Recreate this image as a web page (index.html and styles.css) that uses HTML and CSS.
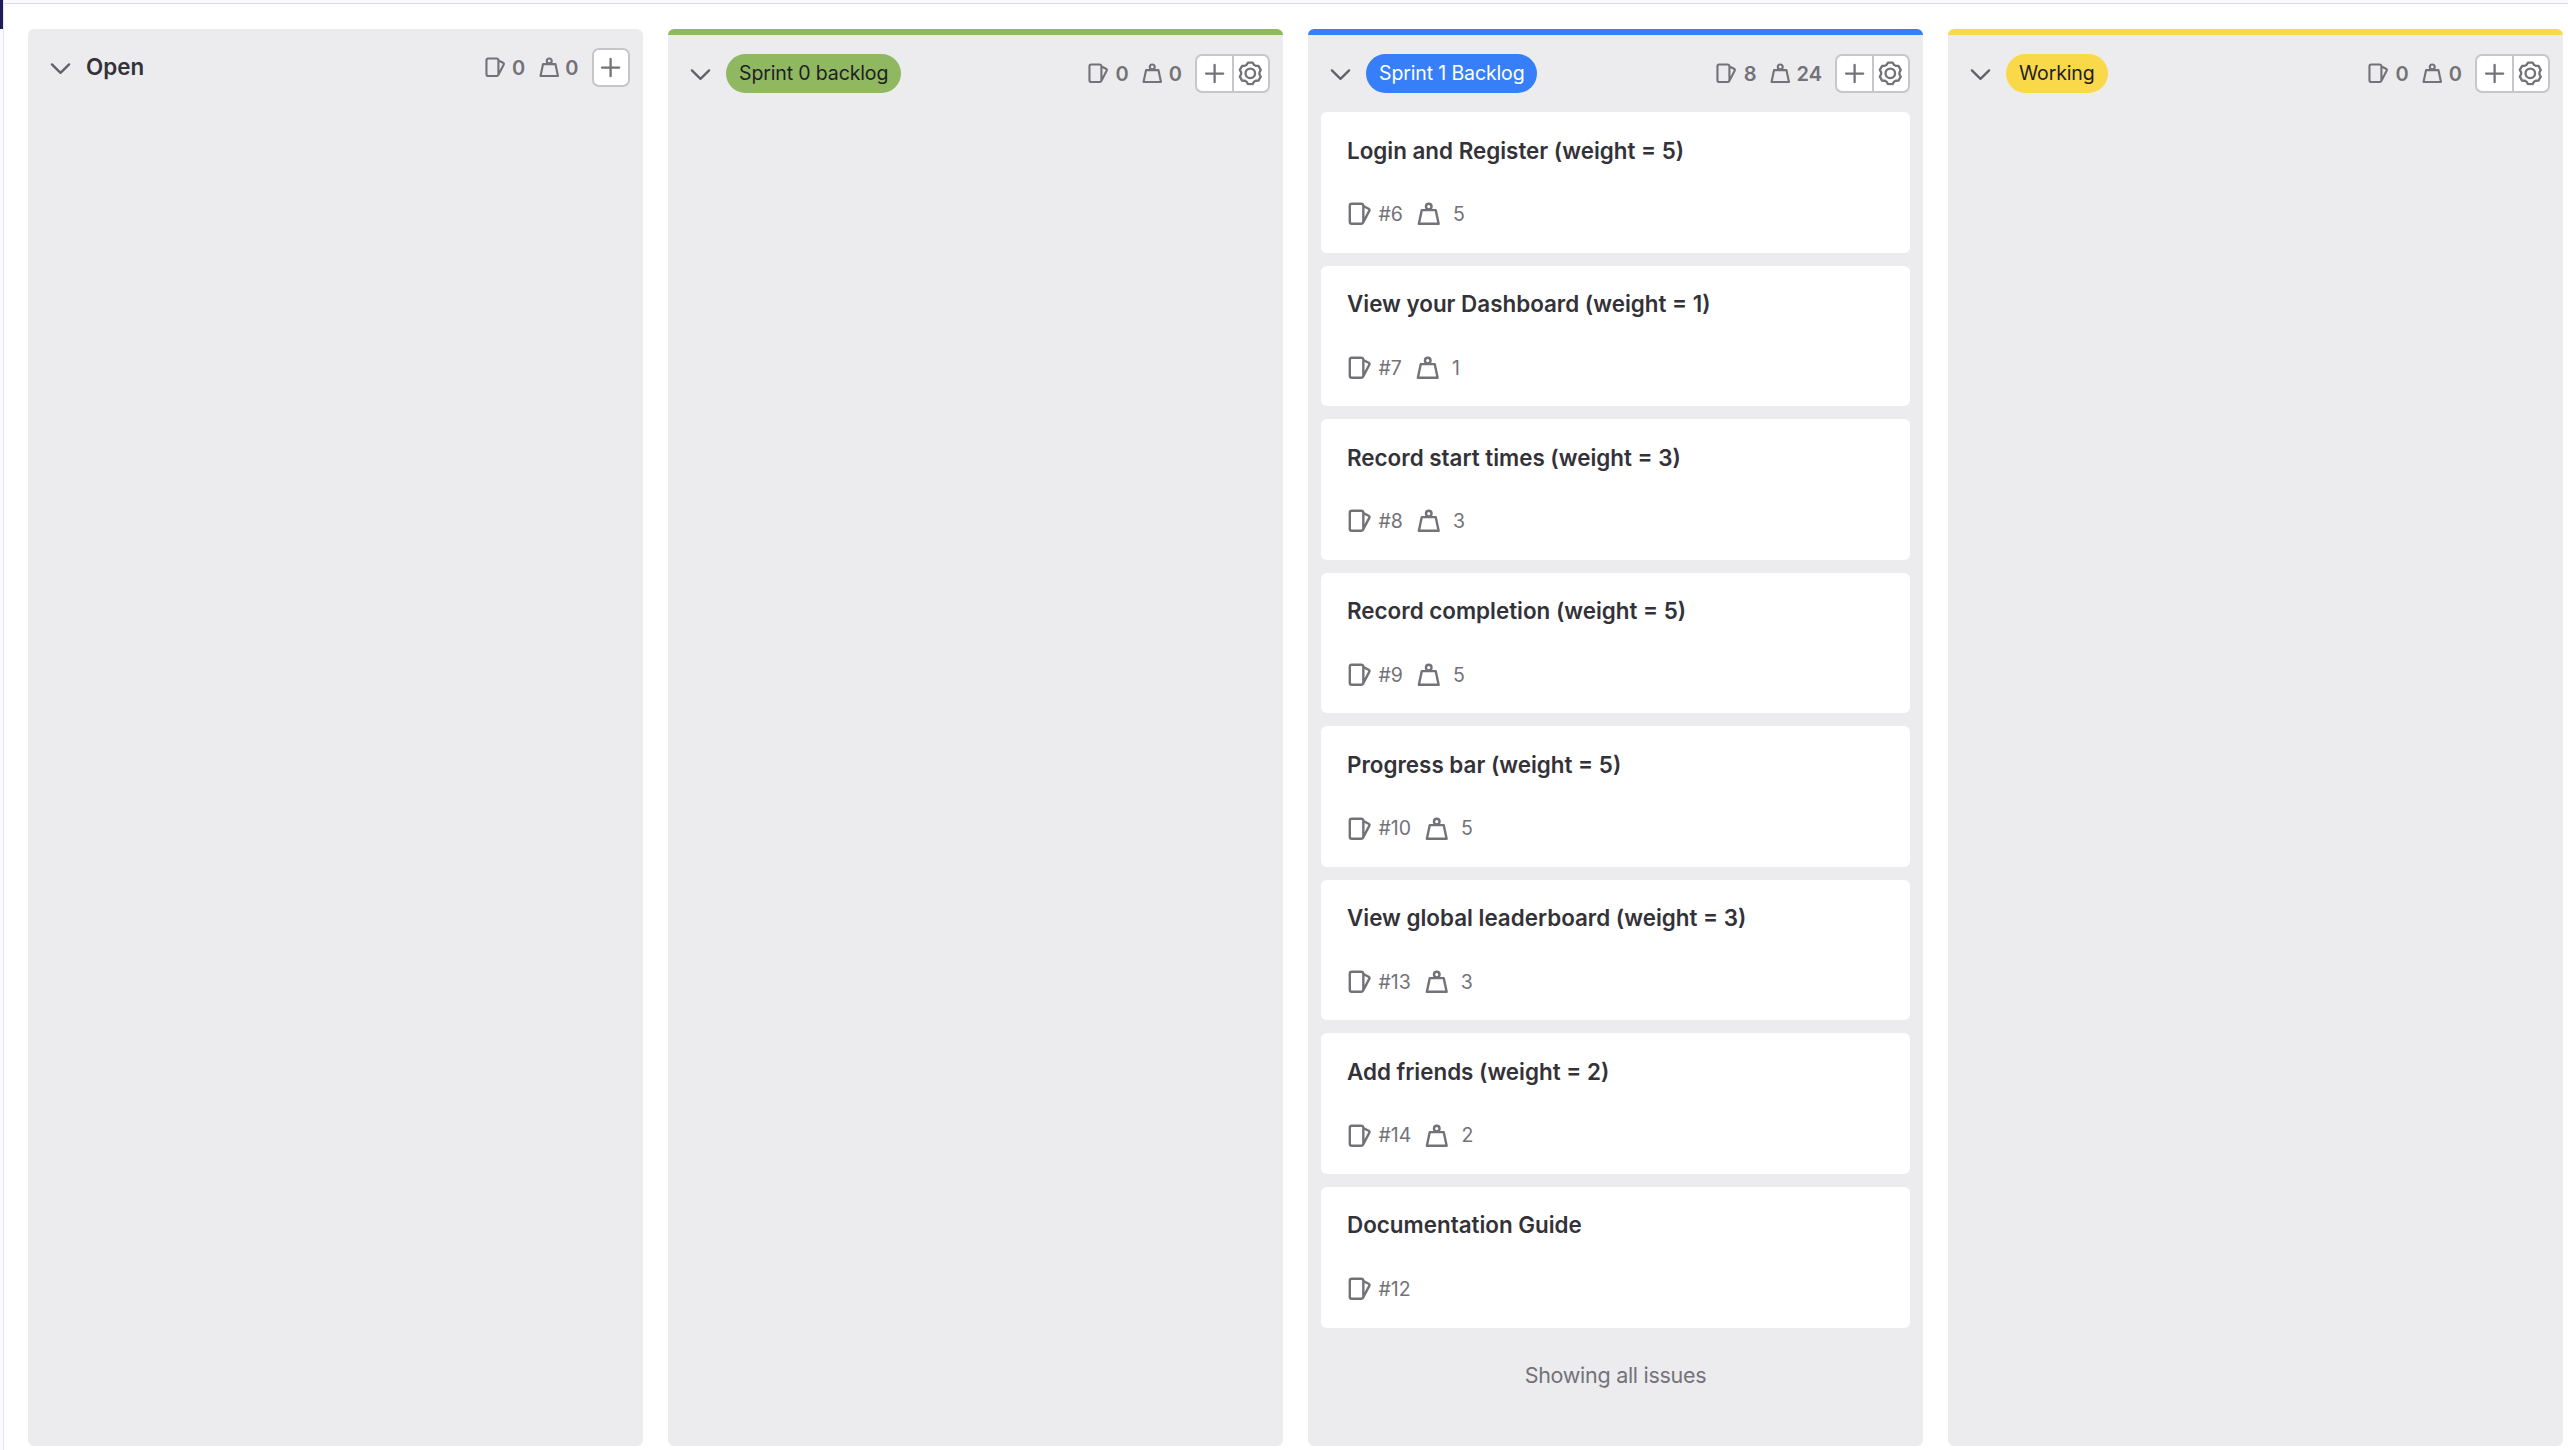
FILE: index.html
```html
<!DOCTYPE html>
<html lang="en">
<head>
<meta charset="utf-8">
<title>Issue board</title>
<link rel="stylesheet" href="styles.css">
</head>
<body>
<svg class="sprite" aria-hidden="true">
  <symbol id="chevron" viewBox="0 0 16 16"><path d="M2.5 6 8 11.4 13.5 6" fill="none" stroke="currentColor" stroke-width="1.5" stroke-linecap="round" stroke-linejoin="round"/></symbol>
  <symbol id="issues" viewBox="0 0 16 16"><path fill-rule="evenodd" d="M3 2.5h6a.5.5 0 0 1 .5.5v10a.5.5 0 0 1-.5.5H3a.5.5 0 0 1-.5-.5V3a.5.5 0 0 1 .5-.5zM1 3a2 2 0 0 1 2-2h6a2 2 0 0 1 1.97 1.658l2.913 1.516a1.75 1.75 0 0 1 .744 2.36l-3.878 7.45a.753.753 0 0 1-.098.145c-.36.526-.965.871-1.651.871H3a2 2 0 0 1-2-2V3zm10 7.254 2.297-4.413a.25.25 0 0 0-.106-.337L11 4.364v5.89z"/></symbol>
  <symbol id="weight" viewBox="0 0 16 16"><g fill="none" stroke="currentColor" stroke-width="1.5" stroke-linejoin="round"><circle cx="8" cy="3.5" r="1.75"/><path d="M3.6 5.75h8.8l1.8 8.5H1.8z"/></g></symbol>
  <symbol id="plus" viewBox="0 0 16 16"><path d="M8.2 2.6v11.2M2.6 8.2h11.2" fill="none" stroke="currentColor" stroke-width="1.5" stroke-linecap="round"/></symbol>
  <symbol id="gear" viewBox="0 0 16 16"><g fill="none" stroke="currentColor" stroke-width="1.5" stroke-linejoin="round"><circle cx="8" cy="8" r="3.1"/><path d="M6.51 1.01H9.49L10.44 2.52 11.53 3.15 13.31 3.22 14.8 5.79 13.97 7.37V8.63L14.8 10.21 13.31 12.78 11.53 12.85 10.44 13.48 9.49 14.99H6.51L5.56 13.48 4.47 12.85 2.69 12.78 1.2 10.21 2.03 8.63V7.37L1.2 5.79 2.69 3.22 4.47 3.15 5.56 2.52z"/></g></symbol>
</svg>
<div class="topbar"></div>
<div class="page">
  <aside class="rail"></aside>
  <main class="board">
    <section class="list">
      <header class="head">
        <svg class="chev"><use href="#chevron"/></svg><h2 class="name">Open</h2>
        <div class="counts"><svg class="ico"><use href="#issues"/></svg><span>0</span><svg class="ico wt"><use href="#weight"/></svg><span>0</span></div>
        <div class="btns"><button class="btn"><svg class="bico"><use href="#plus"/></svg></button></div>
      </header>
    </section>
    <section class="list green">
      <header class="head">
        <svg class="chev"><use href="#chevron"/></svg><span class="pill">Sprint 0 backlog</span>
        <div class="counts"><svg class="ico"><use href="#issues"/></svg><span>0</span><svg class="ico wt"><use href="#weight"/></svg><span>0</span></div>
        <div class="btns"><button class="btn"><svg class="bico"><use href="#plus"/></svg></button><button class="btn"><svg class="bico"><use href="#gear"/></svg></button></div>
      </header>
    </section>
    <section class="list blue">
      <header class="head">
        <svg class="chev"><use href="#chevron"/></svg><span class="pill">Sprint 1 Backlog</span>
        <div class="counts"><svg class="ico"><use href="#issues"/></svg><span>8</span><svg class="ico wt"><use href="#weight"/></svg><span>24</span></div>
        <div class="btns"><button class="btn"><svg class="bico"><use href="#plus"/></svg></button><button class="btn"><svg class="bico"><use href="#gear"/></svg></button></div>
      </header>
      <ul class="cards">
        <li class="card"><h3 class="title">Login and Register (weight = 5)</h3><div class="meta"><svg class="cico"><use href="#issues"/></svg><span>#6</span><svg class="cico cwt"><use href="#weight"/></svg><span>5</span></div></li>
        <li class="card"><h3 class="title">View your Dashboard (weight = 1)</h3><div class="meta"><svg class="cico"><use href="#issues"/></svg><span>#7</span><svg class="cico cwt"><use href="#weight"/></svg><span>1</span></div></li>
        <li class="card"><h3 class="title">Record start times (weight = 3)</h3><div class="meta"><svg class="cico"><use href="#issues"/></svg><span>#8</span><svg class="cico cwt"><use href="#weight"/></svg><span>3</span></div></li>
        <li class="card"><h3 class="title">Record completion (weight = 5)</h3><div class="meta"><svg class="cico"><use href="#issues"/></svg><span>#9</span><svg class="cico cwt"><use href="#weight"/></svg><span>5</span></div></li>
        <li class="card"><h3 class="title">Progress bar (weight = 5)</h3><div class="meta"><svg class="cico"><use href="#issues"/></svg><span>#10</span><svg class="cico cwt"><use href="#weight"/></svg><span>5</span></div></li>
        <li class="card"><h3 class="title">View global leaderboard (weight = 3)</h3><div class="meta"><svg class="cico"><use href="#issues"/></svg><span>#13</span><svg class="cico cwt"><use href="#weight"/></svg><span>3</span></div></li>
        <li class="card"><h3 class="title">Add friends (weight = 2)</h3><div class="meta"><svg class="cico"><use href="#issues"/></svg><span>#14</span><svg class="cico cwt"><use href="#weight"/></svg><span>2</span></div></li>
        <li class="card"><h3 class="title">Documentation Guide</h3><div class="meta"><svg class="cico"><use href="#issues"/></svg><span>#12</span></div></li>
      </ul>
      <p class="end">Showing all issues</p>
    </section>
    <section class="list yellow">
      <header class="head">
        <svg class="chev"><use href="#chevron"/></svg><span class="pill">Working</span>
        <div class="counts"><svg class="ico"><use href="#issues"/></svg><span>0</span><svg class="ico wt"><use href="#weight"/></svg><span>0</span></div>
        <div class="btns"><button class="btn"><svg class="bico"><use href="#plus"/></svg></button><button class="btn"><svg class="bico"><use href="#gear"/></svg></button></div>
      </header>
    </section>
  </main>
</div>
</body>
</html>
```
FILE: styles.css
```css
* { box-sizing: border-box; }
body { margin: 0; height: 1450px; overflow: hidden; display: flex; flex-direction: column; background: #fff; color: #333238; font-family: Inter, "Liberation Sans", sans-serif; font-size: 21.5px; }
svg { display: block; flex: none; fill: currentColor; }
.sprite { position: absolute; width: 0; height: 0; }
.topbar { flex: none; height: 4px; margin-left: 4px; background: #fbfafd; border-bottom: 1px solid #dcdcde; }
.page { flex: 1; display: flex; min-height: 0; }
.rail { flex: none; width: 4px; margin-top: -4px; background: linear-gradient(#1f1c5c, #1f1c5c) 0 0 / 3px 29px no-repeat #fbfafd; border-right: 1px solid #e7e4f2; }
.board { display: flex; gap: 25px; padding: 25px 0 4px 24px; }
.list { width: 615px; background: #ececef; border-radius: 6px; }
.green { border-top: 6px solid #8fb861; --label: #8fb861; --ink: #1f1e24; }
.blue { border-top: 6px solid #377ff8; --label: #377ff8; --ink: #fff; }
.yellow { border-top: 6px solid #f9d849; --label: #f9d849; --ink: #1f1e24; }
.head { display: flex; align-items: center; height: 77px; padding: 0 13px 0 20px; }
.chev { width: 25px; height: 25px; margin-right: 13px; color: #626168; }
.name { margin: 0 0 2px; font-size: 22.4px; font-weight: 620; }
.pill { height: 39px; padding: 0 13px; border-radius: 20px; background: var(--label); color: var(--ink); font-size: 19.5px; letter-spacing: -0.13px; line-height: 39px; white-space: nowrap; }
.counts { display: flex; align-items: center; margin-left: auto; color: #737278; font-size: 20px; font-weight: 600; }
.ico { width: 22.5px; height: 22.5px; margin-right: 6px; }
.wt { margin-left: 12.5px; margin-right: 5px; }
.btns { display: flex; margin-left: 13px; border: 2px solid #c6c6ca; border-radius: 7px; background: #fff; }
.btn { display: grid; place-items: center; width: 34.5px; height: 35px; padding: 0; border: 0; background: none; color: #737278; }
.btn + .btn { width: 36.5px; border-left: 2px solid #c6c6ca; }
.bico { width: 24.6px; height: 24.6px; }
.cards { display: flex; flex-direction: column; gap: 13px; margin: 0; padding: 0 13px; list-style: none; }
.card { height: 140.57px; padding: 23.5px 26px; border-radius: 6px; background: #fff; }
.title { margin: 0; font-size: 22.4px; line-height: 30px; font-weight: 620; }
.meta { display: flex; align-items: center; height: 25px; margin-top: 36px; color: #737278; font-size: 19.5px; }
.cico { width: 25.5px; height: 25.5px; margin-right: 6px; }
.cwt { margin-left: 13px; margin-right: 11.5px; }
.end { margin: 32px 0 0; color: #737278; letter-spacing: -0.28px; line-height: 30px; text-align: center; }
```
